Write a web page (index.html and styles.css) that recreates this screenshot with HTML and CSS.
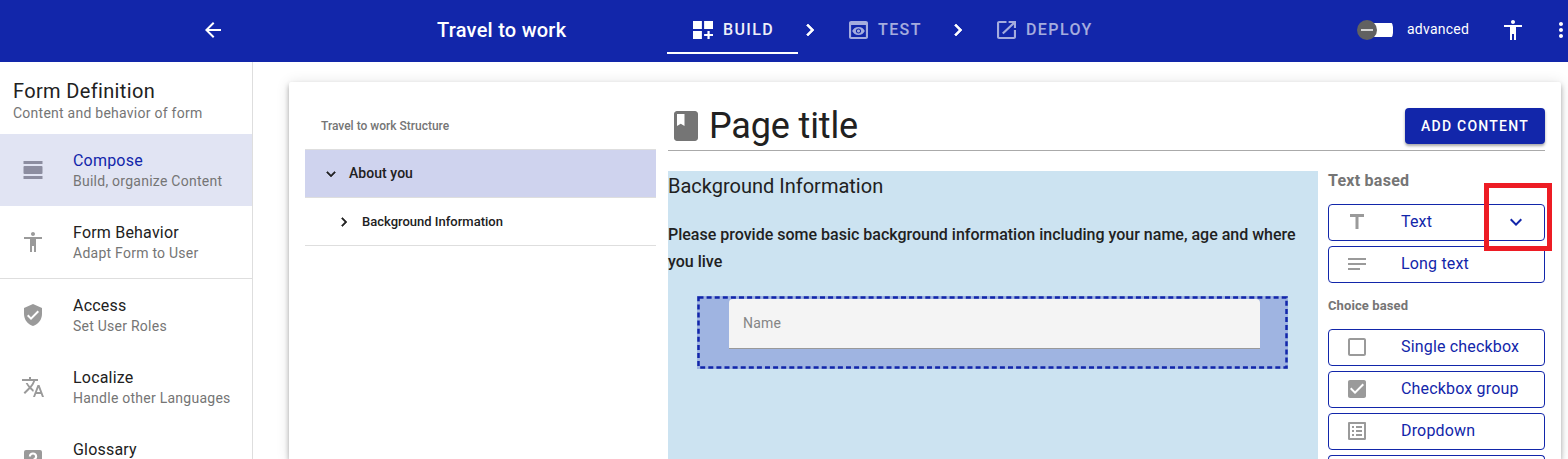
FILE: index.html
```html
<!DOCTYPE html>
<html lang="en">
<head>
<meta charset="utf-8">
<title>Travel to work</title>
<link rel="stylesheet" href="styles.css">
</head>
<body>
<header class="topbar">
  <svg class="icon back" viewBox="0 0 24 24"><path d="M20 11H7.83l5.59-5.59L12 4l-8 8 8 8 1.41-1.41L7.83 13H20v-2z"/></svg>
  <h1 class="app-title">Travel to work</h1>
  <nav class="steps">
    <a class="step active"><svg class="step-icon wide" viewBox="3 3 18 18" preserveAspectRatio="none"><path d="M3 3h8v8H3zm10 0h8v8h-8zM3 13h8v8H3zm15 0h-2v3h-3v2h3v3h2v-3h3v-2h-3z"/></svg><span>BUILD</span></a>
    <svg class="icon sep" viewBox="0 0 24 24"><path d="M8.59 16.59 13.17 12 8.59 7.41 10 6l6 6-6 6z"/></svg>
    <a class="step test"><svg class="step-icon" viewBox="3 3 18 18" preserveAspectRatio="none"><path d="M19 3H5c-1.11 0-2 .9-2 2v14c0 1.1.89 2 2 2h14c1.1 0 2-.9 2-2V5c0-1.1-.9-2-2-2zm0 16H5V7h14v12zm-5.5-6c0 .83-.67 1.5-1.5 1.5s-1.5-.67-1.5-1.5.67-1.500 1.5-1.500 1.500.670 1.500 1.500zM12 9c-2.730 0-5.060 1.660-6 4 .940 2.340 3.270 4 6 4s5.060-1.660 6-4c-.940-2.340-3.270-4-6-4zm0 6.500c-1.380 0-2.500-1.120-2.500-2.500s1.120-2.500 2.500-2.500 2.500 1.120 2.500 2.500-1.120 2.500-2.500 2.500z"/></svg><span>TEST</span></a>
    <svg class="icon sep" viewBox="0 0 24 24"><path d="M8.59 16.59 13.17 12 8.59 7.41 10 6l6 6-6 6z"/></svg>
    <a class="step deploy"><svg class="step-icon" viewBox="3 3 18 18" preserveAspectRatio="none"><path d="M19 19H5V5h7V3H5c-1.110 0-2 .9-2 2v14c0 1.100.890 2 2 2h14c1.100 0 2-.9 2-2v-7h-2v7zM14 3v2h3.590l-9.830 9.830 1.410 1.410L19 6.410V10h2V3h-7z"/></svg><span>DEPLOY</span></a>
  </nav>
  <div class="tools">
    <span class="switch"><span class="thumb"></span></span>
    <span class="switch-label">advanced</span>
    <svg class="icon person" viewBox="0 0 24 24"><path d="M12 2c1.100 0 2 .9 2 2s-.9 2-2 2-2-.9-2-2 .9-2 2-2zm9 7h-6v13h-2v-6h-2v6H9V9H3V7h18v2z"/></svg>
    <svg class="icon more" viewBox="0 0 24 24"><path d="M12 8c1.100 0 2-.9 2-2s-.9-2-2-2-2 .9-2 2 .9 2 2 2zm0 2c-1.100 0-2 .9-2 2s.9 2 2 2 2-.9 2-2-.9-2-2-2zm0 6c-1.100 0-2 .9-2 2s.9 2 2 2 2-.9 2-2-.9-2-2-2z"/></svg>
  </div>
</header>
<div class="shell">
  <aside class="sidebar">
    <div class="side-head"><h2>Form Definition</h2><p>Content and behavior of form</p></div>
    <a class="side-item selected"><svg class="icon" viewBox="0 0 24 24"><path d="M2.500 3h19v3h-19zM3.500 8h17a1 1 0 0 1 1 1v6a1 1 0 0 1-1 1h-17a1 1 0 0 1-1-1V9a1 1 0 0 1 1-1zM2.500 18h19v3h-19z"/></svg><div><h3>Compose</h3><p>Build, organize Content</p></div></a>
    <a class="side-item ruled"><svg class="icon" viewBox="0 0 24 24"><path d="M12 2c1.100 0 2 .9 2 2s-.9 2-2 2-2-.9-2-2 .9-2 2-2zm9 7h-6v13h-2v-6h-2v6H9V9H3V7h18v2z"/></svg><div><h3>Form Behavior</h3><p>Adapt Form to User</p></div></a>
    <a class="side-item"><svg class="icon" viewBox="0 0 24 24"><path d="M12 1 3 5v6c0 5.550 3.840 10.740 9 12 5.160-1.260 9-6.450 9-12V5l-9-4zm-2 16-4-4 1.410-1.410L10 14.170l6.590-6.590L18 9l-8 8z"/></svg><div><h3>Access</h3><p>Set User Roles</p></div></a>
    <a class="side-item"><svg class="icon" viewBox="0 0 24 24"><path d="M12.870 15.070l-2.540-2.510.030-.030c1.740-1.940 2.980-4.170 3.710-6.530H17V4h-7V2H8v2H1v1.990h11.170C11.500 7.920 10.440 9.750 9 11.350 8.070 10.320 7.300 9.190 6.690 8h-2c.730 1.630 1.730 3.170 2.980 4.560l-5.090 5.020L4 19l5-5 3.110 3.110.760-2.040zM18.500 10h-2L12 22h2l1.120-3h4.750L21 22h2l-4.500-12zm-2.620 7l1.620-4.330L19.120 17h-3.240z"/></svg><div><h3>Localize</h3><p>Handle other Languages</p></div></a>
    <a class="side-item last"><svg class="icon" viewBox="0 0 24 24"><path fill-rule="evenodd" d="M5 3h14a2 2 0 0 1 2 2v14a2 2 0 0 1-2 2H5a2 2 0 0 1-2-2V5a2 2 0 0 1 2-2zm5.900 12.200h2.200v-.7c0-1.100 3.100-2 3.100-5 0-2.400-1.900-4-4.200-4S7.800 7.100 7.800 9.400H10c0-1.100.8-1.900 2-1.900s2 .8 2 1.900c0 1.900-3.100 2.300-3.100 4.900zm0 1.300h2.200v2.200h-2.200z"/></svg><div><h3>Glossary</h3></div></a>
  </aside>
  <main class="stage">
    <section class="card">
      <div class="tree">
        <h4>Travel to work Structure</h4>
        <div class="node open"><svg viewBox="0 0 24 24"><path d="M7.410 8.590 12 13.170l4.590-4.580L18 10l-6 6-6-6z"/></svg><span>About you</span></div>
        <div class="node child"><svg viewBox="0 0 24 24"><path d="M8.590 16.590 13.170 12 8.590 7.410 10 6l6 6-6 6z"/></svg><span>Background Information</span></div>
      </div>
      <div class="page">
        <div class="page-head">
          <svg class="book" viewBox="0 0 24 24"><path fill-rule="evenodd" d="M18 2H6c-1.100 0-2 .9-2 2v16c0 1.100.9 2 2 2h12c1.100 0 2-.9 2-2V4c0-1.100-.9-2-2-2zM6 4h5v8l-2.500-1.500L6 12V4z"/></svg>
          <h2>Page title</h2>
          <button class="add">ADD CONTENT</button>
        </div>
        <div class="page-body">
          <div class="canvas">
            <h3>Background Information</h3>
            <p>Please provide some basic background information including your name, age and where you live</p>
            <div class="dropzone">
              <svg class="outline" width="591" height="73"><rect x="1.500" y="1.500" width="588" height="70"/></svg>
              <div class="field">Name</div>
            </div>
          </div>
          <div class="palette">
            <h5 class="large">Text based</h5>
            <button class="option"><svg viewBox="0 0 24 24"><path d="M5 4v3h5.500v12h3V7H19V4z"/></svg><span>Text</span><svg class="expand" viewBox="0 0 24 24"><path d="M7.410 8.590 12 13.170l4.590-4.580L18 10l-6 6-6-6z"/></svg><i class="marker"></i></button>
            <button class="option"><svg viewBox="0 0 24 24"><path d="M3 6h18v2H3zm0 5h18v2H3zm0 5h12v2H3z"/></svg><span>Long text</span></button>
            <h5>Choice based</h5>
            <button class="option"><svg viewBox="0 0 24 24"><path d="M19 5v14H5V5h14m0-2H5c-1.100 0-2 .9-2 2v14c0 1.100.9 2 2 2h14c1.100 0 2-.9 2-2V5c0-1.100-.9-2-2-2z"/></svg><span>Single checkbox</span></button>
            <button class="option"><svg viewBox="0 0 24 24"><path d="M19 3H5c-1.110 0-2 .9-2 2v14c0 1.100.890 2 2 2h14c1.110 0 2-.9 2-2V5c0-1.100-.890-2-2-2zm-9 14l-5-5 1.410-1.410L10 14.170l7.590-7.590L19 8l-9 9z"/></svg><span>Checkbox group</span></button>
            <button class="option"><svg viewBox="0 0 24 24"><path d="M19 5v14H5V5h14m1.100-2H3.900c-.5 0-.9.4-.9.9v16.200c0 .4.4.9.9.9h16.200c.4 0 .9-.5.9-.9V3.900c0-.5-.5-.9-.9-.9zM11 7h6v2h-6V7zm0 4h6v2h-6v-2zm0 4h6v2h-6zM7 7h2v2H7zm0 4h2v2H7zm0 4h2v2H7z"/></svg><span>Dropdown</span></button>
            <div class="option partial"></div>
          </div>
        </div>
      </div>
    </section>
  </main>
</div>
</body>
</html>
```

FILE: styles.css
```css
* { box-sizing: border-box; }
html, body { height: 459px; overflow: hidden; }
body { margin: 0; background: #fff; color: #212121; font-family: Roboto, "Liberation Sans", sans-serif; display: flex; flex-direction: column; }
h1, h2, h3, h4, h5, p { margin: 0; font-weight: 400; white-space: nowrap; }
svg { fill: currentColor; flex: none; display: block; }
button { font-family: inherit; margin: 0; }
.icon { width: 24px; height: 24px; }

.topbar { height: 62px; flex: none; background: #1226aa; color: #fff; display: flex; align-items: center; padding-bottom: 2px; overflow: hidden; }
.back { margin-left: 201px; }
.app-title { width: 230px; flex: none; margin-left: 212px; font-size: 20px; line-height: 24px; font-weight: 500; letter-spacing: 0.25px; }
.steps { display: flex; align-items: center; height: 60px; flex: none; }
.step { display: flex; align-items: center; gap: 10px; height: 48px; width: 131px; font-size: 16px; font-weight: 500; letter-spacing: 1.4px; line-height: 18px; opacity: .62; }
.step.active { opacity: 1; padding-left: 26px; border-bottom: 2px solid #fff; margin-top: -1px; }
.step.active span { opacity: .93; padding-top: 2px; }
.step-icon { width: 19px; height: 18px; }
.step.active .step-icon { margin-top: 3px; }
.step-icon.wide { width: 20px; }
.sep { stroke: currentColor; stroke-width: .7; }
.test, .deploy { width: 124px; margin-left: 27px; }
.test { width: 97px; }
.tools { margin-left: auto; display: flex; align-items: center; flex: none; width: 211px; }
.switch { width: 36px; flex: none; height: 20px; display: flex; align-items: center; background: linear-gradient(#fff, #fff) right center / 26px 14px no-repeat; border-radius: 7px; }
.thumb { width: 20px; height: 20px; border-radius: 50%; background: linear-gradient(#d5d5d5, #d5d5d5) center / 12px 2px no-repeat #616161; }
.switch-label { width: 94px; flex: none; margin-left: 14px; font-size: 14px; line-height: 20px; letter-spacing: .25px; position: relative; top: -1px; }
.more { margin-left: 24px; }

.shell { display: flex; flex: 1; min-height: 0; }
.sidebar { width: 253px; flex: none; border-right: 1px solid #dedede; overflow: hidden; }
.side-head { height: 72px; padding: 17px 13px 0; }
.side-head h2 { font-size: 20px; line-height: 24px; letter-spacing: .35px; }
.side-head p, .side-item p { font-size: 14px; line-height: 20px; letter-spacing: .25px; color: #757575; }
.side-item { height: 72px; display: flex; padding: 0 0 0 21px; }
.side-item .icon { margin: 24px 28px 0 0; color: #9a9a9a; }
.side-item > div { padding-top: 15px; }
.side-item h3 { font-size: 16px; line-height: 24px; letter-spacing: .2px; }
.side-item p { margin-top: -2px; }
.side-item.last { height: 36px; overflow: hidden; }
.selected { background: #e1e4f3; }
.selected .icon { color: #8c8da0; }
.selected h3 { color: #1226aa; }
.ruled { height: 73px; border-bottom: 1px solid #dedede; }

.stage { flex: 1; min-width: 0; padding: 20px 7px 0 36px; overflow: hidden; }
.card { height: 377px; border-radius: 2px 2px 0 0; background: #fff; box-shadow: 0 3px 5px rgba(0,0,0,.3), 0 1px 14px rgba(0,0,0,.12); display: flex; padding: 0 16px; }
.tree { width: 351px; flex: none; margin-right: 12px; }
.tree h4 { height: 67px; padding: 34px 16px 0; font-size: 12px; line-height: 20px; font-weight: 500; color: #757575; }
.node { display: flex; align-items: center; height: 48px; border-bottom: 1px solid #dedede; font-weight: 500; }
.node svg { width: 18px; height: 18px; stroke: currentColor; stroke-width: .7; }
.open { height: 49px; border-top: 1px solid #dedede; background: #cfd3ee; padding-left: 17px; gap: 9px; font-size: 14px; letter-spacing: .05px; }
.open span { padding-bottom: 1px; }
.child { padding-left: 30px; gap: 9px; font-size: 13px; }
.page { flex: 1; min-width: 0; }
.page-head { height: 69px; display: flex; align-items: center; border-bottom: 1px solid #aaa; padding-top: 20px; }
.book { width: 36px; height: 36px; color: #757575; }
.page-head h2 { margin-left: 5px; font-size: 36px; line-height: 44px; letter-spacing: -.15px; }
.add { margin-left: auto; width: 140px; height: 36px; border: 0; border-radius: 4px; padding: 0 0 1px; background: #1226aa; color: #fff; font-size: 14px; font-weight: 500; letter-spacing: 1.25px; box-shadow: 0 2px 3px rgba(0,0,0,.35); }
.page-body { display: flex; margin-top: 20px; height: 288px; overflow: visible; }
.canvas { width: 650px; background: #cce3f1; margin-right: 10px; flex: none; }
.canvas h3 { font-size: 20px; line-height: 30px; }
.canvas p { margin-top: 20px; font-size: 16px; line-height: 27px; font-weight: 500; white-space: normal; }
.dropzone { position: relative; width: 591px; height: 73px; margin: 21px 0 0 29px; padding: 3px 28px 0 32px; background: #9fb4e1; }
.outline { position: absolute; left: 0; top: 0; fill: none; background: none; stroke: #1226aa; stroke-width: 2.500; stroke-dasharray: 5 3.100; }
.field { height: 50px; background: #f4f4f4; border-bottom: 1px solid #999; border-radius: 4px 4px 0 0; padding-left: 14px; font-size: 14px; line-height: 49px; letter-spacing: .2px; color: #858585; }
.palette { flex: 1; }
.palette h5 { height: 41px; padding-top: 8px; font-size: 13px; line-height: 20px; font-weight: 700; letter-spacing: .1px; color: #757575; }
.palette h5.large { height: 33px; padding: 0; font-size: 16px; letter-spacing: .25px; }
.option { position: relative; display: flex; align-items: center; width: 217px; height: 37px; margin-bottom: 5px; padding: 0 0 2px 16px; border: 1px solid #1226aa; border-radius: 4px; background: #fff; color: #1226aa; font-size: 16px; letter-spacing: .17px; text-align: left; }
.option svg { width: 24px; height: 24px; color: #9a9a9a; }
.option span { margin-left: 32px; width: 103px; white-space: nowrap; }
.option svg.expand { color: #1226aa; }
.option.partial { height: 4px; margin: 0; padding: 0; border-bottom: 0; border-radius: 4px 4px 0 0; }
.marker { position: absolute; left: 155px; top: -22px; width: 68px; height: 68px; border: 5px solid #ed1c24; z-index: 2; }
```
